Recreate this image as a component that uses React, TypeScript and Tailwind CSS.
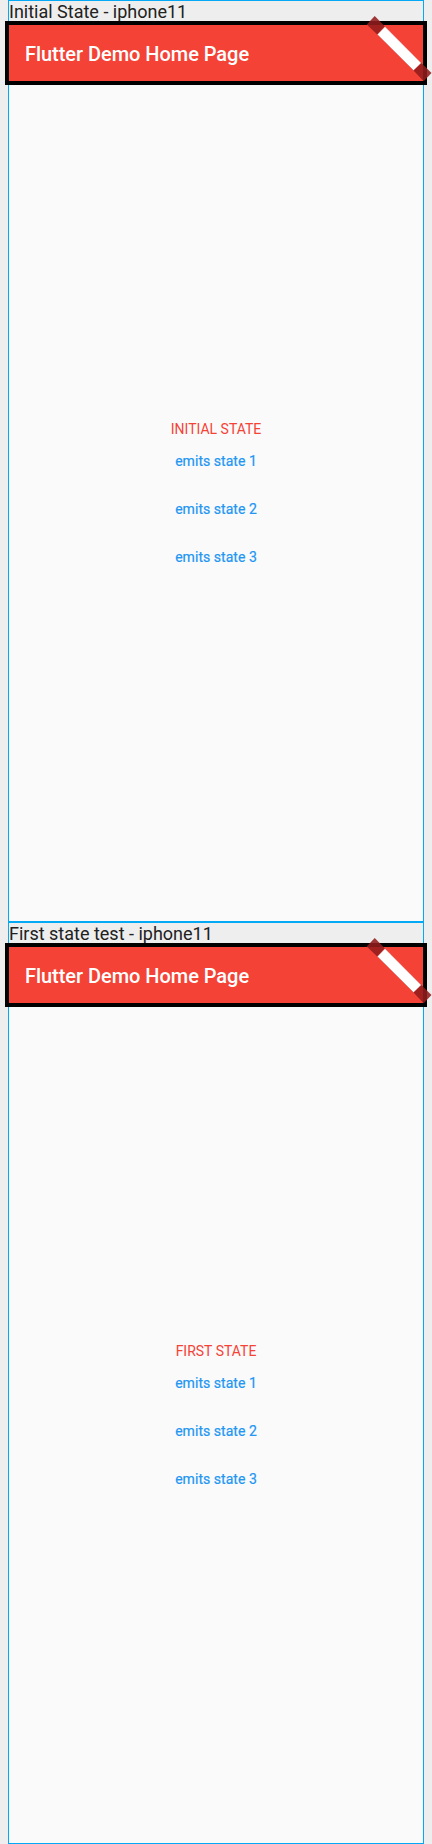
function Banner() {
  return (
    <svg className="absolute -top-2.5 -right-2.5 h-20 w-20" viewBox="0 0 80 80" aria-hidden="true">
      <path d="M21.7 1 32 11.5 24.3 19.5 13.7 9.5Z" fill="#921c1c" fillOpacity="0.88" />
      <path d="M68.3 48 78.5 58 70.7 66.3 60.5 55.5Z" fill="#921c1c" fillOpacity="0.88" />
      <path d="M32 11.5 68.3 48 60.5 55.5 24.3 19.5Z" fill="#fff" stroke="#c62828" strokeWidth="0.4" />
    </svg>
  );
}

const emits = ["emits state 1", "emits state 2", "emits state 3"];

function Device({ label, state }: { label: string; state: string }) {
  return (
    <section className="flex h-[922px] w-[416px] flex-col border border-[#03a9f4]">
      <h2 className="h-6 whitespace-nowrap text-[18px] leading-[21px] text-[#212121]">{label}</h2>
      <div className="flex flex-1 flex-col bg-[#fafafa]">
        <header className="relative flex h-14 items-center bg-[#f44336] px-4 pt-0.5 shadow-[0_0_0_4px_#000]">
          <h1 className="text-xl font-medium tracking-[-0.04px] text-white">Flutter Demo Home Page</h1>
          <Banner />
        </header>
        <main className="flex flex-1 flex-col items-center justify-center text-sm">
          <p className="h-4 leading-4 text-[#f44336]">{state}</p>
          {emits.map((text) => (
            <button key={text} className="h-12 tracking-[0.04px] text-[#2196f3] [-webkit-text-stroke:0.2px_#2196f3]">
              {text}
            </button>
          ))}
        </main>
      </div>
    </section>
  );
}

export default function App() {
  return (
    <div className="flex h-[1844px] w-[432px] flex-col items-center overflow-hidden bg-[#eeeeee] font-[Roboto,sans-serif]">
      <Device label="Initial State - iphone11" state="INITIAL STATE" />
      <Device label="First state test - iphone11" state="FIRST STATE" />
    </div>
  );
}
